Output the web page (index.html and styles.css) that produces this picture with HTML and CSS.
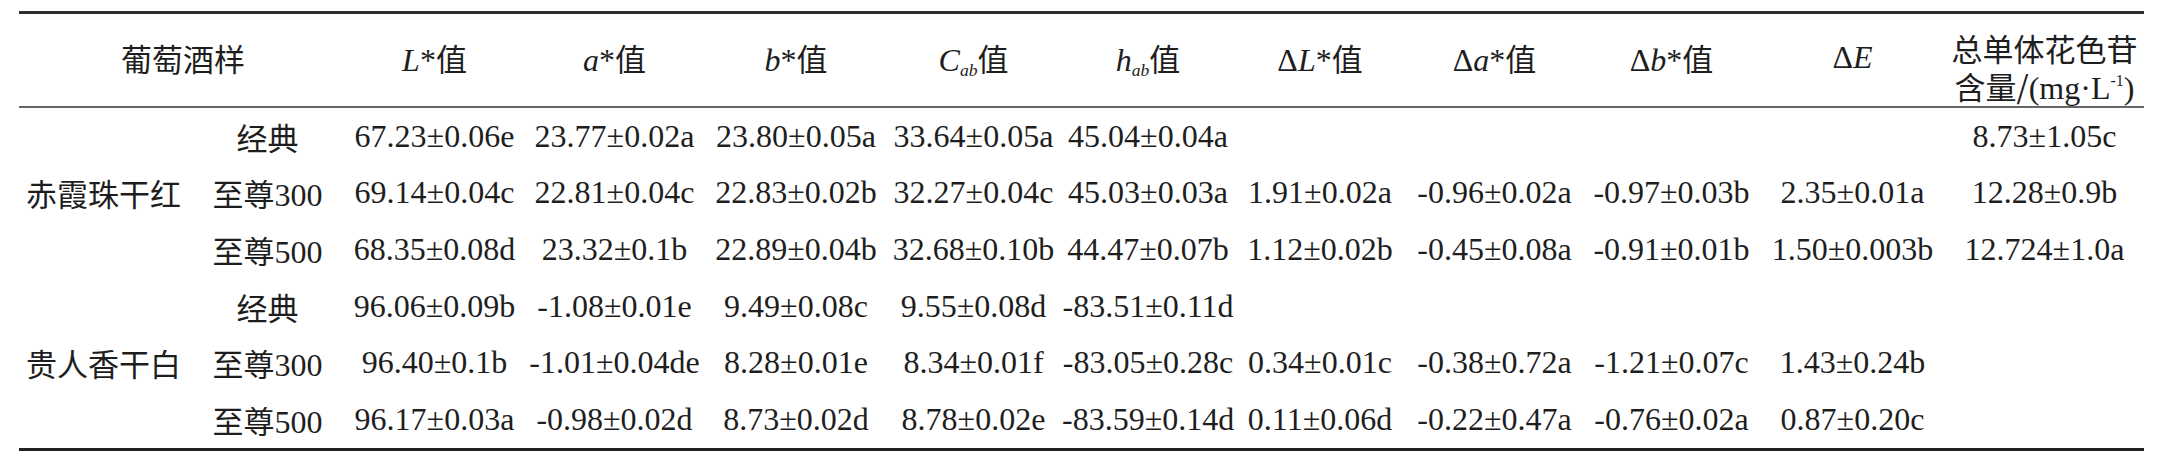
FILE: index.html
```html
<!DOCTYPE html>
<html lang="en">
<head>
    <meta charset="utf-8">
    <link rel="stylesheet" href="styles.css">
</head>
<body>
    <div class="page">
        <table class="color-table">
            <colgroup>
                <col class="c-group">
                <col class="c-name">
                <col class="c-l">
                <col class="c-a">
                <col class="c-b">
                <col class="c-c">
                <col class="c-h">
                <col class="c-dl">
                <col class="c-da">
                <col class="c-db">
                <col class="c-de">
                <col class="c-total">
            </colgroup>
            <thead>
                <tr>
                    <th colspan="2"><span class="zh">葡萄酒样</span></th>
                    <th><i>L</i>*<span class="zh">值</span></th>
                    <th><i>a</i>*<span class="zh">值</span></th>
                    <th><i>b</i>*<span class="zh">值</span></th>
                    <th><i>C</i><span class="sub">ab</span><span class="zh">值</span></th>
                    <th><i>h</i><span class="sub">ab</span><span class="zh">值</span></th>
                    <th>Δ<i>L</i>*<span class="zh">值</span></th>
                    <th>Δ<i>a</i>*<span class="zh">值</span></th>
                    <th>Δ<i>b</i>*<span class="zh">值</span></th>
                    <th>Δ<i>E</i></th>
                    <th class="two-line"><span class="zh">总单体花色苷</span><br><span class="zh">含量/</span>(mg·L<span class="sup">-1</span>)</th>
                </tr>
            </thead>
            <tbody>
                <tr>
                    <td rowspan="3"><span class="zh">赤霞珠干红</span></td>
                    <td><span class="zh">经典</span></td>
                    <td>67.23±0.06e</td>
                    <td>23.77±0.02a</td>
                    <td>23.80±0.05a</td>
                    <td>33.64±0.05a</td>
                    <td>45.04±0.04a</td>
                    <td></td>
                    <td></td>
                    <td></td>
                    <td></td>
                    <td>8.73±1.05c</td>
                </tr>
                <tr>
                    <td><span class="zh">至尊</span>300</td>
                    <td>69.14±0.04c</td>
                    <td>22.81±0.04c</td>
                    <td>22.83±0.02b</td>
                    <td>32.27±0.04c</td>
                    <td>45.03±0.03a</td>
                    <td>1.91±0.02a</td>
                    <td>-0.96±0.02a</td>
                    <td>-0.97±0.03b</td>
                    <td>2.35±0.01a</td>
                    <td>12.28±0.9b</td>
                </tr>
                <tr>
                    <td><span class="zh">至尊</span>500</td>
                    <td>68.35±0.08d</td>
                    <td>23.32±0.1b</td>
                    <td>22.89±0.04b</td>
                    <td>32.68±0.10b</td>
                    <td>44.47±0.07b</td>
                    <td>1.12±0.02b</td>
                    <td>-0.45±0.08a</td>
                    <td>-0.91±0.01b</td>
                    <td>1.50±0.003b</td>
                    <td>12.724±1.0a</td>
                </tr>
                <tr>
                    <td rowspan="3"><span class="zh">贵人香干白</span></td>
                    <td><span class="zh">经典</span></td>
                    <td>96.06±0.09b</td>
                    <td>-1.08±0.01e</td>
                    <td>9.49±0.08c</td>
                    <td>9.55±0.08d</td>
                    <td>-83.51±0.11d</td>
                    <td></td>
                    <td></td>
                    <td></td>
                    <td></td>
                    <td></td>
                </tr>
                <tr>
                    <td><span class="zh">至尊</span>300</td>
                    <td>96.40±0.1b</td>
                    <td>-1.01±0.04de</td>
                    <td>8.28±0.01e</td>
                    <td>8.34±0.01f</td>
                    <td>-83.05±0.28c</td>
                    <td>0.34±0.01c</td>
                    <td>-0.38±0.72a</td>
                    <td>-1.21±0.07c</td>
                    <td>1.43±0.24b</td>
                    <td></td>
                </tr>
                <tr>
                    <td><span class="zh">至尊</span>500</td>
                    <td>96.17±0.03a</td>
                    <td>-0.98±0.02d</td>
                    <td>8.73±0.02d</td>
                    <td>8.78±0.02e</td>
                    <td>-83.59±0.14d</td>
                    <td>0.11±0.06d</td>
                    <td>-0.22±0.47a</td>
                    <td>-0.76±0.02a</td>
                    <td>0.87±0.20c</td>
                    <td></td>
                </tr>
            </tbody>
        </table>
    </div>
</body>
</html>
```

FILE: styles.css
```css
body {
    margin: 0;
    background: #fff;
}

.page {
    padding: 11px 19px 0;
}

.color-table {
    width: 2125px;
    table-layout: fixed;
    border-collapse: separate;
    border-spacing: 0;
    border-top: 3px solid #2e2e2e;
    border-bottom: 3px solid #222;
    font-family: "Liberation Serif", "Times New Roman", serif;
    font-size: 32px;
    color: #1e1e1e;
}

.zh {
    font-family: "Noto Sans CJK SC", sans-serif;
    font-size: 31px;
}

.c-group { width: 169px; }
.c-name { width: 159px; }
.c-l { width: 175px; }
.c-a { width: 185px; }
.c-b { width: 178px; }
.c-c { width: 177px; }
.c-h { width: 172px; }
.c-dl { width: 172px; }
.c-da { width: 177px; }
.c-db { width: 177px; }
.c-de { width: 185px; }
.c-total { width: 199px; }

th,
td {
    padding: 0;
    text-align: center;
    vertical-align: middle;
    white-space: nowrap;
    font-weight: normal;
}

thead tr {
    height: 94px;
}

th {
    border-bottom: 2px solid #666;
    padding-bottom: 6px;
}

th.two-line {
    line-height: 35px;
    padding: 16px 0 0;
}

tbody tr {
    height: 56.66px;
}

.sub {
    font-size: 0.55em;
    font-style: italic;
    vertical-align: -0.3em;
    line-height: 0;
}

.sup {
    font-size: 0.5em;
    vertical-align: 0.8em;
    line-height: 0;
}
```
